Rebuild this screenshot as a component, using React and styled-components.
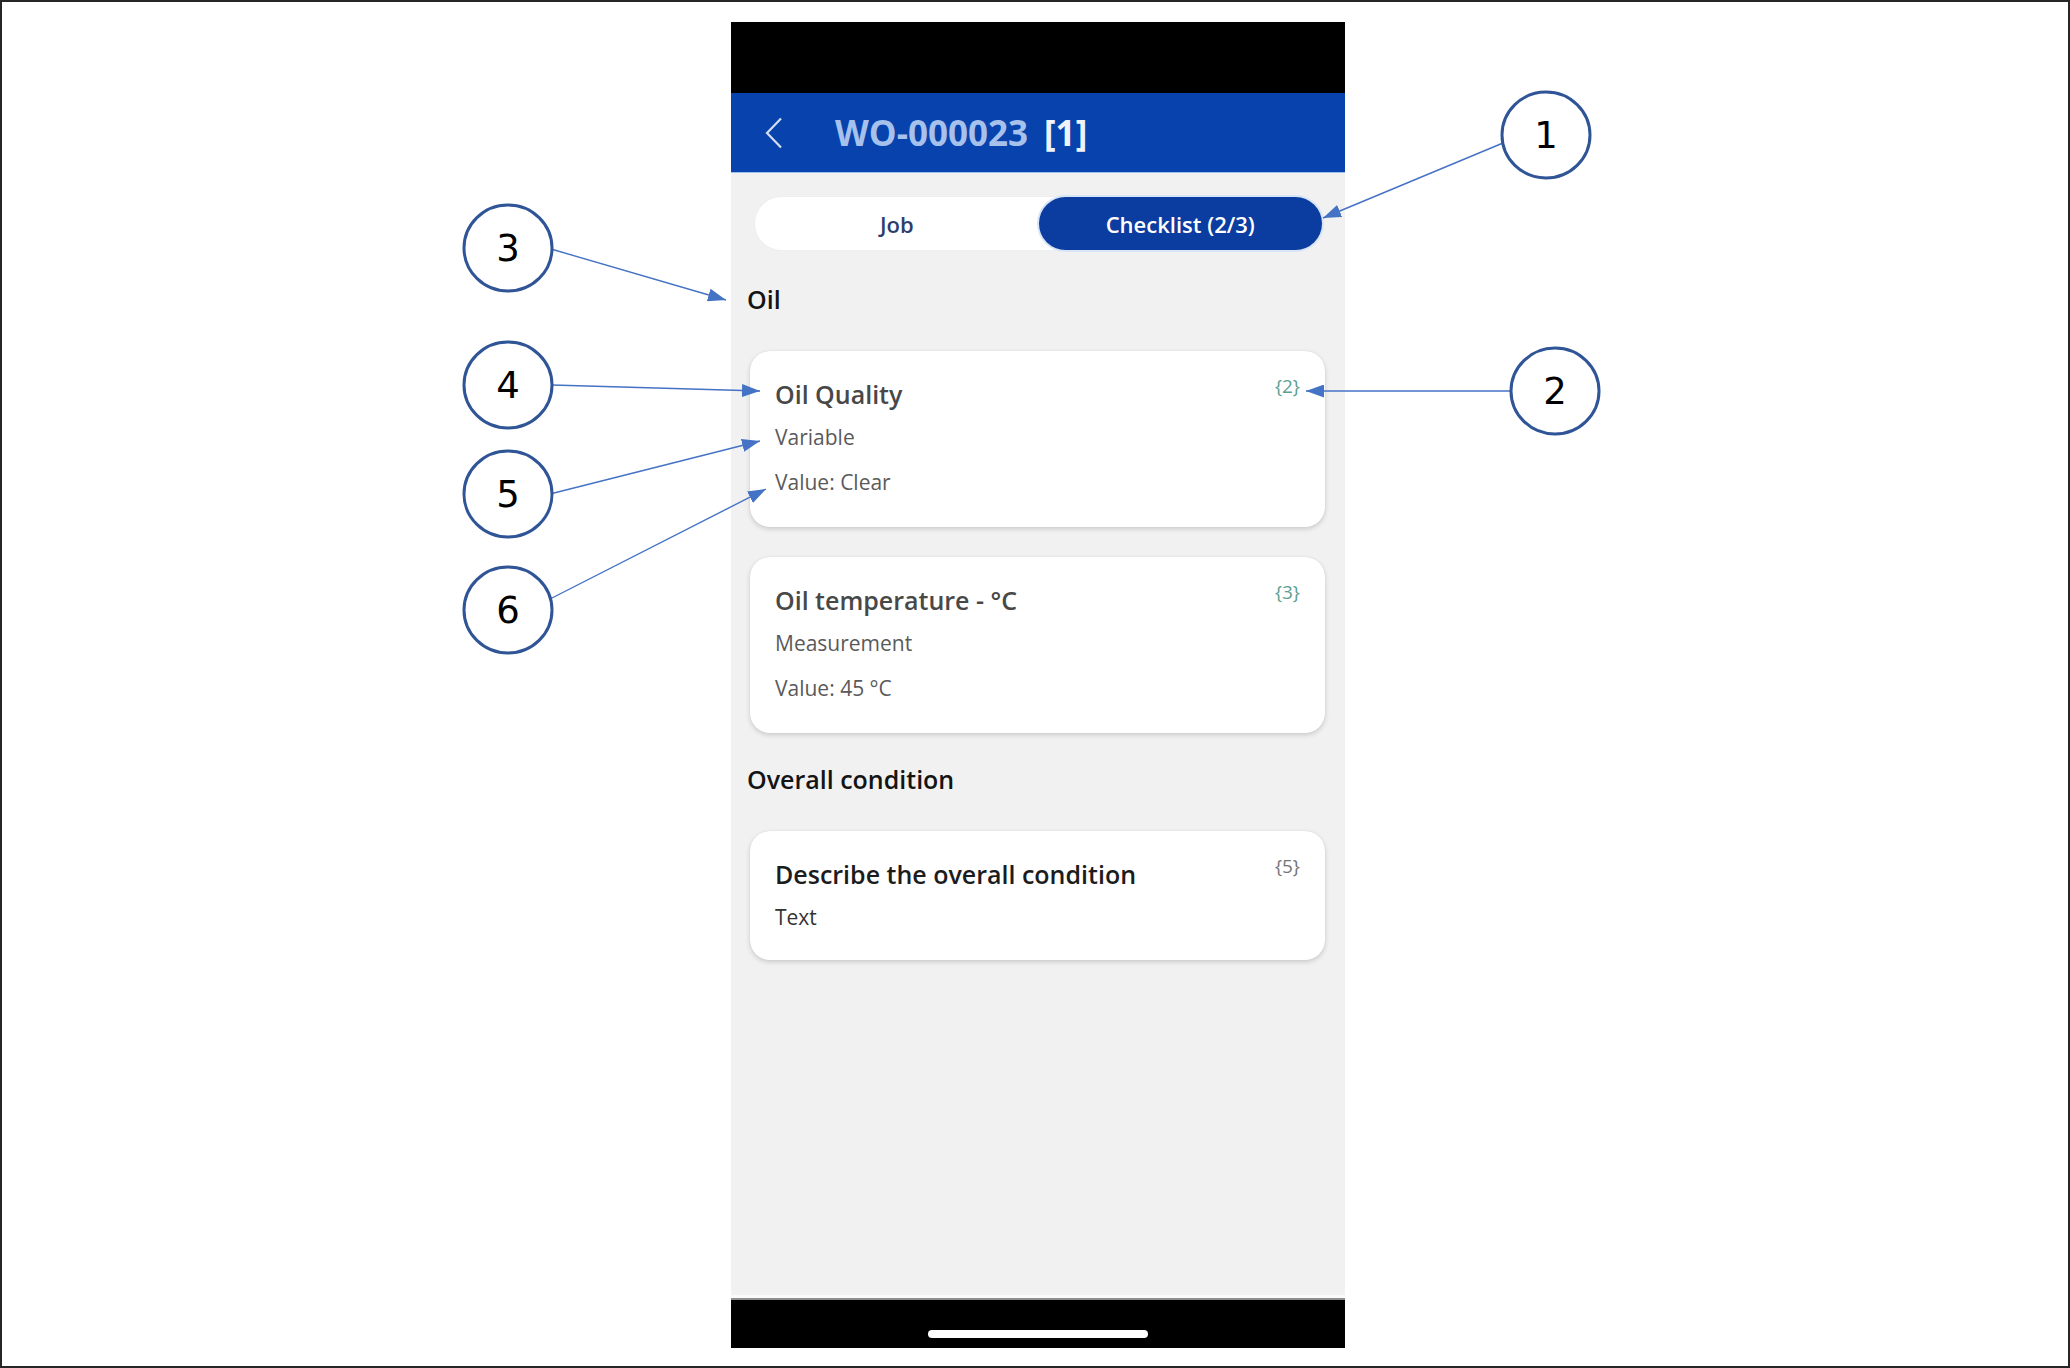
import React from 'react';
import styled, { createGlobalStyle } from 'styled-components';

const Global = createGlobalStyle`
  html, body { margin: 0; padding: 0; background: #fff; overflow: hidden; }
  * { box-sizing: border-box; }
`;

const Page = styled.div`
  position: relative;
  width: 2070px;
  height: 1368px;
  border: 2px solid #262626;
  background: #fff;
  display: flex;
  align-items: flex-start;
  padding: 20px 0 0 729px;
  font-family: "Open Sans", "Noto Sans", sans-serif;
`;

const Phone = styled.div`
  width: 614px;
  height: 1326px;
  display: flex;
  flex-direction: column;
  background: #f1f1f1;
`;

const StatusBar = styled.div`
  flex: none;
  height: 71px;
  background: #000;
`;

const Header = styled.header`
  flex: none;
  height: 80px;
  background: #0842ad;
  border-bottom: 1px solid #9fc0ec;
  display: flex;
  align-items: center;
  padding-left: 34px;
  gap: 52px;
`;

const BackIcon = styled.svg`
  width: 18px;
  height: 32px;
  flex: none;
`;

const Title = styled.h1`
  margin: 0;
  display: flex;
  gap: 16px;
  font-size: 35px;
  font-weight: 700;
  line-height: 40px;
  color: #a6c1ec;
`;

const TitleTag = styled.span`
  color: #eef2fb;
`;

const Content = styled.main`
  flex: 1;
  display: flex;
  flex-direction: column;
  padding: 24px 20px 0 16px;
`;

const Tabs = styled.div`
  height: 53px;
  margin: 0 3px 3px 8px;
  border-radius: 27px;
  background: #fff;
  box-shadow: 0 0 0 1px #eceef2;
  display: grid;
  grid-template-columns: 1fr 1fr;
`;

const Tab = styled.div`
  border-radius: 27px;
  display: flex;
  align-items: center;
  justify-content: center;
  font-size: 22px;
  font-weight: 600;
  color: ${p => (p.$active ? '#ffffff' : '#2d3e6c')};
  background: ${p => (p.$active ? '#0b3c9f' : 'transparent')};
  box-shadow: ${p => (p.$active ? '0 0 0 2px #d8e5f7' : 'none')};
`;

const Section = styled.section`
  display: flex;
  flex-direction: column;
  margin-top: 30px;
`;

const SectionTitle = styled.h2`
  margin: 0 0 36px;
  font-size: 25px;
  font-weight: 600;
  line-height: 32px;
  color: #141414;
`;

const CardList = styled.div`
  display: flex;
  flex-direction: column;
  gap: 30px;
`;

const Card = styled.article`
  margin-left: 3px;
  background: #fff;
  border-radius: 20px;
  padding: 26px 25px ${p => p.$pb}px 25px;
  box-shadow: 0 2px 5px rgba(0, 0, 0, 0.16), 0 0 1px rgba(0, 0, 0, 0.12);
`;

const CardHead = styled.div`
  display: flex;
  justify-content: space-between;
  align-items: flex-start;
`;

const CardTitle = styled.div`
  font-size: 25px;
  font-weight: 600;
  line-height: 34px;
  color: ${p => (p.$done ? '#484848' : '#1c1c1c')};
`;

const Badge = styled.span`
  margin-top: -4px;
  font-size: 19px;
  line-height: 26px;
  color: ${p => (p.$done ? '#5e9f92' : '#767676')};
`;

const CardLine = styled.div`
  margin-top: ${p => p.$gap}px;
  font-size: 21px;
  line-height: 30px;
  color: ${p => (p.$done ? '#5a5a5a' : '#333333')};
`;

const HomeBar = styled.div`
  flex: none;
  height: 48px;
  background: #000;
  display: flex;
  justify-content: center;
  align-items: flex-end;
  padding-bottom: 10px;
  box-shadow: 0 -2px 0 #8e8e8e, 0 -5px 0 #fafafa;
`;

const HomeIndicator = styled.div`
  width: 220px;
  height: 8px;
  border-radius: 4px;
  background: #fff;
`;

const Annotations = styled.svg`
  position: absolute;
  left: -2px;
  top: -2px;
  width: 2070px;
  height: 1368px;
  pointer-events: none;
  overflow: visible;
`;

const Num = styled.text`
  font-family: "DejaVu Sans", "Liberation Sans", sans-serif;
  font-size: 37px;
  fill: #000;
`;

const sections = [
  {
    title: 'Oil',
    items: [
      { title: 'Oil Quality', badge: '{2}', type: 'Variable', value: 'Value: Clear', done: true },
      { title: 'Oil temperature - °C', badge: '{3}', type: 'Measurement', value: 'Value: 45 °C', done: true },
    ],
  },
  {
    title: 'Overall condition',
    items: [{ title: 'Describe the overall condition', badge: '{5}', type: 'Text', done: false }],
  },
];

const callouts = [
  { n: 1, cx: 1546, cy: 135, from: [1503, 143], to: [1323, 218] },
  { n: 2, cx: 1555, cy: 391, from: [1511, 391], to: [1306, 391] },
  { n: 3, cx: 508, cy: 248, from: [551, 249], to: [726, 300] },
  { n: 4, cx: 508, cy: 385, from: [552, 385], to: [760, 391] },
  { n: 5, cx: 508, cy: 494, from: [550, 494], to: [760, 441] },
  { n: 6, cx: 508, cy: 610, from: [550, 599], to: [766, 489] },
];

export default function App() {
  return (
    <Page>
      <Global />
      <Phone>
        <StatusBar />
        <Header>
          <BackIcon viewBox="0 0 18 32">
            <polyline points="16,1.5 2,16 16,30.5" fill="none" stroke="#d3def3" strokeWidth="2.2" />
          </BackIcon>
          <Title>
            <span>WO-000023</span>
            <TitleTag>[1]</TitleTag>
          </Title>
        </Header>
        <Content>
          <Tabs>
            <Tab>Job</Tab>
            <Tab $active>Checklist (2/3)</Tab>
          </Tabs>
          {sections.map(s => (
            <Section key={s.title}>
              <SectionTitle>{s.title}</SectionTitle>
              <CardList>
                {s.items.map(it => (
                  <Card key={it.title} $pb={it.value ? 30 : 28}>
                    <CardHead>
                      <CardTitle $done={it.done}>{it.title}</CardTitle>
                      <Badge $done={it.done}>{it.badge}</Badge>
                    </CardHead>
                    <CardLine $gap={11} $done={it.done}>{it.type}</CardLine>
                    {it.value && (
                      <CardLine $gap={15} $done={it.done}>{it.value}</CardLine>
                    )}
                  </Card>
                ))}
              </CardList>
            </Section>
          ))}
        </Content>
        <HomeBar>
          <HomeIndicator />
        </HomeBar>
      </Phone>
      <Annotations viewBox="0 0 2070 1368">
        <defs>
          <marker id="ah" markerWidth="18" markerHeight="13" refX="18" refY="6.5" orient="auto" markerUnits="userSpaceOnUse">
            <path d="M0,0 L18,6.5 L0,13 Z" fill="#4472c4" />
          </marker>
        </defs>
        {callouts.map(c => (
          <g key={c.n}>
            <line x1={c.from[0]} y1={c.from[1]} x2={c.to[0]} y2={c.to[1]} stroke="#4472c4" strokeWidth="1.4" markerEnd="url(#ah)" />
            <ellipse cx={c.cx} cy={c.cy} rx="44" ry="43" fill="#fff" stroke="#2f5597" strokeWidth="3" />
            <Num x={c.cx} y={c.cy + 13} textAnchor="middle">{c.n}</Num>
          </g>
        ))}
      </Annotations>
    </Page>
  );
}
